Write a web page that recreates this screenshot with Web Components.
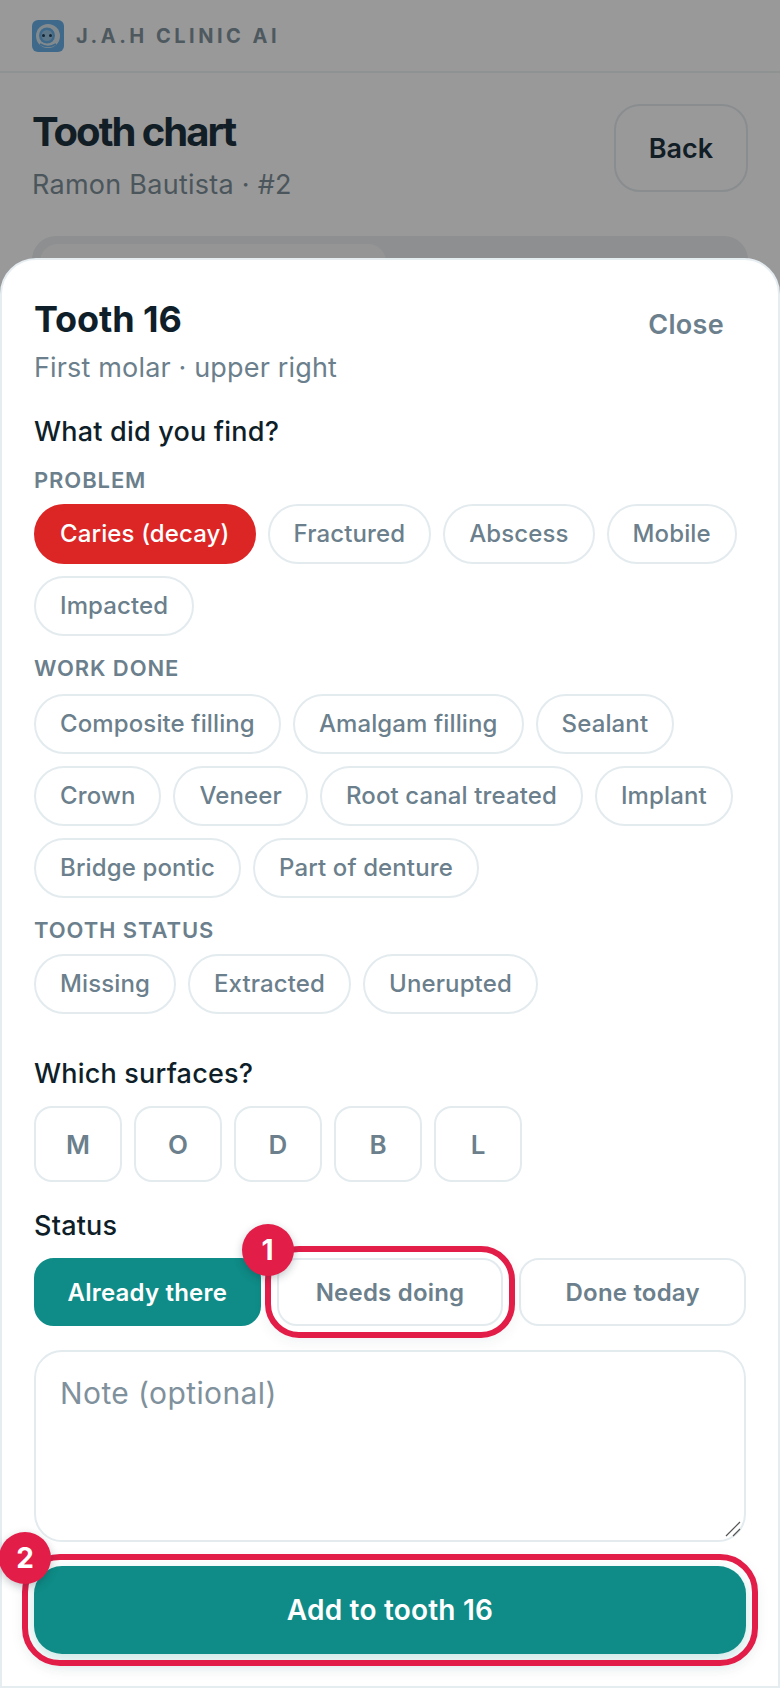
<!DOCTYPE html>
<html>
<head>
<meta charset="utf-8">
<style>
  html,body{margin:0;padding:0;background:#fff;}
  body{font-family:Inter,"Liberation Sans",sans-serif;width:780px;height:1688px;overflow:hidden;position:relative;}
</style>
</head>
<body>

<clinic-header>J.A.H CLINIC AI</clinic-header>
<page-head title-text="Tooth chart" sub="Ramon Bautista · #2"></page-head>
<view-tabs></view-tabs>
<sheet-scrim></sheet-scrim>

<tooth-sheet>
  <sheet-title slot="head" name="Tooth 16" sub="First molar · upper right"></sheet-title>

  <form-label style="margin-top:32px">What did you find?</form-label>
  <group-label>PROBLEM</group-label>
  <chip-row>
    <pick-chip on>Caries (decay)</pick-chip>
    <pick-chip>Fractured</pick-chip>
    <pick-chip>Abscess</pick-chip>
    <pick-chip>Mobile</pick-chip>
    <pick-chip>Impacted</pick-chip>
  </chip-row>
  <group-label style="margin-bottom:13px">WORK DONE</group-label>
  <chip-row>
    <pick-chip>Composite filling</pick-chip>
    <pick-chip>Amalgam filling</pick-chip>
    <pick-chip>Sealant</pick-chip>
    <pick-chip>Crown</pick-chip>
    <pick-chip>Veneer</pick-chip>
    <pick-chip>Root canal treated</pick-chip>
    <pick-chip>Implant</pick-chip>
    <pick-chip>Bridge pontic</pick-chip>
    <pick-chip>Part of denture</pick-chip>
  </chip-row>
  <group-label>TOOTH STATUS</group-label>
  <chip-row>
    <pick-chip>Missing</pick-chip>
    <pick-chip>Extracted</pick-chip>
    <pick-chip>Unerupted</pick-chip>
  </chip-row>

  <form-label style="margin-top:44px">Which surfaces?</form-label>
  <surface-row>
    <surface-btn>M</surface-btn>
    <surface-btn>O</surface-btn>
    <surface-btn>D</surface-btn>
    <surface-btn>B</surface-btn>
    <surface-btn>L</surface-btn>
  </surface-row>

  <form-label style="margin-top:28px">Status</form-label>
  <status-row>
    <status-btn on>Already there</status-btn>
    <tour-ring step="1" style="--ring-radius:34px"><status-btn>Needs doing</status-btn></tour-ring>
    <status-btn>Done today</status-btn>
  </status-row>

  <note-box>Note (optional)</note-box>

  <tour-ring step="2" class="last" style="--ring-radius:38px"><add-button>Add to tooth 16</add-button></tour-ring>
</tooth-sheet>

<script>
// small helper, every element just sets its shadow html
function shadow(el, html){
  el.attachShadow({mode:"open"});
  el.shadowRoot.innerHTML = html;
}

class ClinicHeader extends HTMLElement{
  connectedCallback(){
    shadow(this, `
      <style>
        :host{display:flex;align-items:center;gap:12px;height:71px;padding:0 32px;border-bottom:2px solid #eef3f3;box-sizing:content-box;}
        svg{width:32px;height:32px;display:block;}
        span{font-size:20px;font-weight:700;letter-spacing:3.5px;color:#82959f;}
      </style>
      <svg viewBox="0 0 32 32">
        <rect width="32" height="32" rx="6" fill="#68b0e8"/>
        <circle cx="16" cy="16" r="12" fill="#d9e6ec"/>
        <circle cx="15" cy="15.5" r="8" fill="#68b0e8"/>
        <circle cx="15" cy="15.5" r="5.5" fill="#9cc6e4"/>
        <circle cx="11.5" cy="15.5" r="1.5" fill="#1f4058"/>
        <circle cx="18.5" cy="15.5" r="1.5" fill="#1f4058"/>
        <path d="M8 24q8 5 16 0" fill="none" stroke="#68b0e8" stroke-width="1.6"/>
      </svg>
      <span><slot></slot></span>`);
  }
}

class PageHead extends HTMLElement{
  connectedCallback(){
    shadow(this, `
      <style>
        :host{display:flex;justify-content:space-between;align-items:flex-start;padding:31px 32px 0;}
        h1{margin:4px 0 0;font-size:40px;line-height:48px;font-weight:700;letter-spacing:-2px;color:#1e3240;}
        p{margin:13px 0 0;font-size:27px;line-height:32px;letter-spacing:.26px;color:#7e8f99;}
        button{width:134px;height:88px;box-sizing:border-box;border:2px solid #e6ecef;border-radius:26px;background:transparent;font:600 27px Inter,sans-serif;color:#1e3240;}
      </style>
      <div><h1>${this.getAttribute('title-text')}</h1><p>${this.getAttribute('sub')}</p></div>
      <button>Back</button>`);
  }
}

class ViewTabs extends HTMLElement{
  connectedCallback(){
    shadow(this, `
      <style>
        :host{display:block;margin:35px 32px 0;height:120px;padding:8px;box-sizing:border-box;background:#eceff0;border-radius:24px;}
        div{width:346px;height:104px;background:#f8f9f9;border-radius:18px;}
      </style>
      <div></div>`);
  }
}

class SheetScrim extends HTMLElement{
  connectedCallback(){
    shadow(this, `<style>:host{position:absolute;inset:0;background:rgba(0,0,0,.4);}</style>`);
  }
}

class ToothSheet extends HTMLElement{
  connectedCallback(){
    shadow(this, `
      <style>
        :host{position:absolute;left:0;right:0;bottom:0;top:258px;box-sizing:border-box;background:#fff;border:2px solid #e6edf1;border-radius:36px 36px 0 0;padding:0 32px;display:block;}
      </style>
      <slot name="head"></slot><slot></slot>`);
  }
}

class SheetTitle extends HTMLElement{
  connectedCallback(){
    shadow(this, `
      <style>
        :host{display:flex;justify-content:space-between;align-items:flex-start;padding-top:38px;}
        h2{margin:0;font-size:36px;line-height:42px;font-weight:700;letter-spacing:-.1px;color:#0f1f2a;}
        p{margin:12px 0 0;font-size:27px;line-height:32px;letter-spacing:.16px;color:#6b7f8c;}
        span{font-size:27px;font-weight:600;line-height:32px;letter-spacing:.3px;color:#6b7f8c;padding:11px 22px 0 0;}
      </style>
      <div><h2>${this.getAttribute('name')}</h2><p>${this.getAttribute('sub')}</p></div>
      <span>Close</span>`);
  }
}

class FormLabel extends HTMLElement{
  connectedCallback(){
    shadow(this, `
      <style>:host{display:block;font-size:27px;line-height:32px;letter-spacing:.2px;font-weight:500;color:#0f1f2a;}</style>
      <slot></slot>`);
  }
}

class GroupLabel extends HTMLElement{
  connectedCallback(){
    shadow(this, `
      <style>:host{display:block;margin:19px 0 11px;font-size:22px;line-height:26px;font-weight:600;letter-spacing:.9px;color:#6b7f8c;}</style>
      <slot></slot>`);
  }
}

class ChipRow extends HTMLElement{
  connectedCallback(){
    shadow(this, `
      <style>:host{display:flex;flex-wrap:wrap;gap:12px;}</style>
      <slot></slot>`);
  }
}

class PickChip extends HTMLElement{
  connectedCallback(){
    const on = this.hasAttribute('on');
    shadow(this, `
      <style>
        :host{display:block;box-sizing:border-box;height:60px;padding:0 24px;border-radius:30px;
          border:2px solid ${on?'#dc2626':'#e3ebef'};background:${on?'#dc2626':'#fff'};color:${on?'#fff':'#6b7f8c'};
          font-size:24px;line-height:56px;font-weight:500;letter-spacing:.12px;white-space:nowrap;}
      </style>
      <slot></slot>`);
  }
}

class SurfaceRow extends HTMLElement{
  connectedCallback(){
    shadow(this, `
      <style>:host{display:flex;gap:12px;margin-top:16px;}</style>
      <slot></slot>`);
  }
}

class SurfaceBtn extends HTMLElement{
  connectedCallback(){
    shadow(this, `
      <style>
        :host{display:flex;align-items:center;justify-content:center;box-sizing:border-box;width:88px;height:76px;border:2px solid #e3ebef;border-radius:18px;
          font-size:26px;font-weight:600;color:#6b7f8c;}
      </style>
      <slot></slot>`);
  }
}

class StatusRow extends HTMLElement{
  connectedCallback(){
    shadow(this, `
      <style>:host{display:grid;grid-template-columns:repeat(3,1fr);gap:16px;margin-top:16px;}</style>
      <slot></slot>`);
  }
}

class StatusBtn extends HTMLElement{
  connectedCallback(){
    const on = this.hasAttribute('on');
    shadow(this, `
      <style>
        :host{display:flex;align-items:center;justify-content:center;box-sizing:border-box;height:68px;border-radius:20px;
          border:2px solid ${on?'#0f8c87':'#e3ebef'};background:${on?'#0f8c87':'#fff'};color:${on?'#fff':'#6b7f8c'};
          font-size:24px;font-weight:600;letter-spacing:.2px;}
      </style>
      <slot></slot>`);
  }
}

class NoteBox extends HTMLElement{
  connectedCallback(){
    shadow(this, `
      <style>
        :host{display:block;position:relative;box-sizing:border-box;height:192px;margin-top:24px;padding:22px 24px;border:2px solid #e3ebef;border-radius:28px;
          font-size:30px;line-height:38px;letter-spacing:.4px;color:#7f919c;}
        svg{position:absolute;right:2px;bottom:2px;width:18px;height:18px;}
      </style>
      <slot></slot>
      <svg viewBox="0 0 18 18"><path d="M2 16 16 2M9 16l7-7" stroke="#555" stroke-width="1.2" fill="none"/></svg>`);
  }
}

class AddButton extends HTMLElement{
  connectedCallback(){
    shadow(this, `
      <style>
        :host{display:flex;align-items:center;justify-content:center;height:88px;border-radius:28px;background:#0f8c87;color:#fff;
          font-size:28px;font-weight:600;letter-spacing:.2px;box-shadow:0 6px 16px rgba(15,140,135,.22);}
      </style>
      <slot></slot>`);
  }
}

// the tutorial ring with the numbered badge on its corner
class TourRing extends HTMLElement{
  connectedCallback(){
    shadow(this, `
      <style>
        :host{display:block;position:relative;}
        :host(.last){margin-top:24px;}
        .ring{position:absolute;inset:-12px;border:6px solid #e11d48;border-radius:var(--ring-radius);pointer-events:none;box-shadow:0 4px 14px rgba(20,50,60,.06);}
        .badge{position:absolute;left:-35px;top:-34px;width:52px;height:52px;border-radius:50%;background:#e11d48;color:#fff;
          font-size:28px;font-weight:700;line-height:52px;text-align:center;box-shadow:0 3px 8px rgba(15,31,42,.25);}
      </style>
      <slot></slot>
      <div class="ring"></div>
      <div class="badge">${this.getAttribute('step')}</div>`);
  }
}

customElements.define('clinic-header', ClinicHeader);
customElements.define('page-head', PageHead);
customElements.define('view-tabs', ViewTabs);
customElements.define('sheet-scrim', SheetScrim);
customElements.define('tooth-sheet', ToothSheet);
customElements.define('sheet-title', SheetTitle);
customElements.define('form-label', FormLabel);
customElements.define('group-label', GroupLabel);
customElements.define('chip-row', ChipRow);
customElements.define('pick-chip', PickChip);
customElements.define('surface-row', SurfaceRow);
customElements.define('surface-btn', SurfaceBtn);
customElements.define('status-row', StatusRow);
customElements.define('status-btn', StatusBtn);
customElements.define('note-box', NoteBox);
customElements.define('add-button', AddButton);
customElements.define('tour-ring', TourRing);
</script>
</body>
</html>
